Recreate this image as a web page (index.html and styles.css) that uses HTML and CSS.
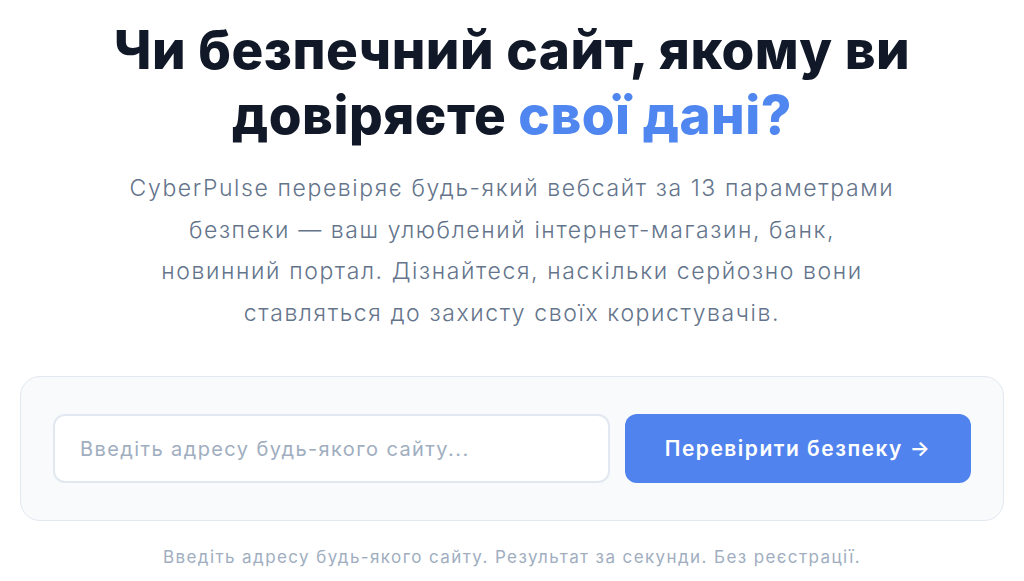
FILE: index.html
```html
<!DOCTYPE html>
<html lang="uk">
<head>
    <meta charset="UTF-8">
    <meta name="viewport" content="width=device-width, initial-scale=1.0">
    <title>CyberPulse</title>
    <link rel="stylesheet" href="styles.css">
</head>
<body>
    <section class="hero">
        <h1 class="hero-title">Чи безпечний сайт, якому ви довіряєте <span class="accent">свої дані?</span></h1>
        <p class="hero-text">CyberPulse перевіряє будь-який вебсайт за 13 параметрами<br>
            безпеки — ваш улюблений інтернет-магазин, банк,<br>
            новинний портал. Дізнайтеся, наскільки серйозно вони<br>
            ставляться до захисту своїх користувачів.</p>
        <form class="check-card" onsubmit="return false;">
            <input class="check-input" type="text" placeholder="Введіть адресу будь-якого сайту...">
            <button class="check-button" type="submit">Перевірити безпеку →</button>
        </form>
        <p class="hero-note">Введіть адресу будь-якого сайту. Результат за секунди. Без реєстрації.</p>
    </section>
</body>
</html>
```

FILE: styles.css
```css
body, html {
    margin: 0;
    padding: 0;
    background-color: #fff;
}
body {
    font-family: "Inter", "Noto Sans", sans-serif;
    color: #0f172a;
}
.hero {
    width: 984px;
    margin: 0 auto;
    padding-top: 18px;
    text-align: center;
}
.hero-title {
    margin: 0 auto;
    width: 860px;
    font-size: 53px;
    line-height: 65px;
    font-weight: 800;
    letter-spacing: 0.5px;
    color: #111827;
}
.accent {
    color: #4f86ef;
}
.hero-text {
    margin: 20px auto 0;
    width: 840px;
    font-size: 23px;
    line-height: 41.5px;
    font-weight: 300;
    letter-spacing: 1.6px;
    color: #64748b;
}
.check-card {
    display: flex;
    gap: 15px;
    margin-top: 42px;
    padding: 37px 32px;
    background: #f8fafc;
    border: 1px solid #e2e8f0;
    border-radius: 20px;
}
.check-input {
    flex: 1;
    height: 69px;
    box-sizing: border-box;
    padding: 0 25px;
    border: 2px solid #e2e8f0;
    border-radius: 12px;
    background: #fff;
    font-family: inherit;
    font-size: 20px;
    letter-spacing: 1.4px;
    color: #0f172a;
    outline: none;
}
.check-input::placeholder {
    color: #a0aec0;
}
.check-button {
    width: 346px;
    height: 69px;
    border: none;
    border-radius: 12px;
    background: #5083ee;
    color: #fff;
    font-family: inherit;
    font-size: 21px;
    font-weight: 600;
    letter-spacing: 1.5px;
    cursor: pointer;
}
.hero-note {
    margin: 26px 0 0;
    font-size: 17px;
    letter-spacing: 1.4px;
    color: #a0aec0;
}
```
